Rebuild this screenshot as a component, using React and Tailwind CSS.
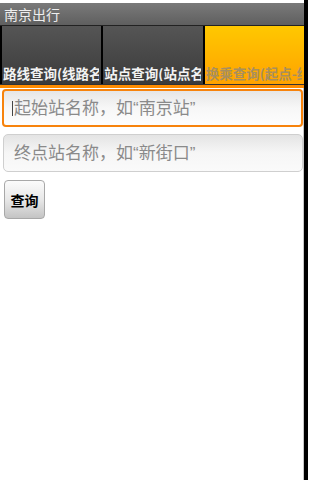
import React from "react";

const cjk = { fontFamily: '"Noto Sans CJK SC", "Noto Sans", sans-serif' };
const q = { fontFamily: '"Liberation Sans", Arial, sans-serif' };

function Tab({ label, active }) {
  return (
    <div
      className={
        "flex-1 basis-0 min-w-0 h-full flex items-end pb-[3px] " +
        (active
          ? "bg-gradient-to-b from-[#ffc800] to-[#ffa200]"
          : "bg-gradient-to-b from-[#555555] to-[#3b3b3b]")
      }
    >
      <div className="flex-1 min-w-0 overflow-hidden mr-[2px]">
        <span
          className={
            "block whitespace-nowrap text-[13.5px] leading-[16px] font-bold pl-[1px] " +
            (active ? "text-[#a88f5e]" : "text-[#f2f2f2]")
          }
        >
          {label}
        </span>
      </div>
    </div>
  );
}

export default function App() {
  return (
    <div className="w-[308px] h-[480px] flex bg-black overflow-hidden" style={cjk}>
      <div className="w-[304px] h-full flex flex-col bg-white">
        <div className="h-[3px] bg-white" />
        <div className="h-[22px] bg-gradient-to-b from-[#7a7a7a] to-[#5f5f5f] flex items-center pl-[4px]">
          <span className="text-[14px] leading-[16px] text-[#eeeeee]">南京出行</span>
        </div>
        <div className="h-[1px] bg-[#222222]" />
        <div className="h-[58px] flex gap-[2px] pl-[2px] bg-black">
          <Tab label="路线查询(线路名称)" />
          <Tab label="站点查询(站点名称)" />
          <Tab label="换乘查询(起点-终点)" active />
        </div>
        <div className="h-[1px] bg-[#333333]" />
        <div className="h-[3px] bg-[#ff8c00]" />
        <div className="flex-1 flex flex-col border-r border-[#c8c8c8] pl-[2px] pt-[1px]">
          <div className="h-[38px] rounded-[4px] border-2 border-[#f7830c] bg-gradient-to-b from-[#e6e6e6] via-[#f7f7f7] to-[#fdfdfd] flex items-center pl-[8px]">
            <div className="w-[1px] h-[15px] bg-[#444444] mr-[1px]" />
            <span className="text-[17px] leading-[20px] text-[#8a8a8a] whitespace-nowrap">
              起始站名称，如<span style={q}>“</span>南京站<span style={q}>”</span>
            </span>
          </div>
          <div className="mt-[7px] ml-[1px] h-[38px] rounded-[5px] border border-[#cfcfcf] bg-gradient-to-b from-[#e4e4e4] via-[#f6f6f6] to-[#fafafa] flex items-center pl-[10px]">
            <span className="text-[17px] leading-[20px] text-[#8a8a8a] whitespace-nowrap">
              终点站名称，如<span style={q}>“</span>新街口<span style={q}>”</span>
            </span>
          </div>
          <div className="mt-[8px] ml-[2px] w-[41px] h-[39px] rounded-[4px] border border-[#a8a8a8] bg-gradient-to-b from-[#fbfbfb] via-[#e8e8e8] to-[#c4c4c4] flex items-center justify-center">
            <span className="text-[14px] leading-[16px] text-black font-semibold">查询</span>
          </div>
        </div>
      </div>
    </div>
  );
}
